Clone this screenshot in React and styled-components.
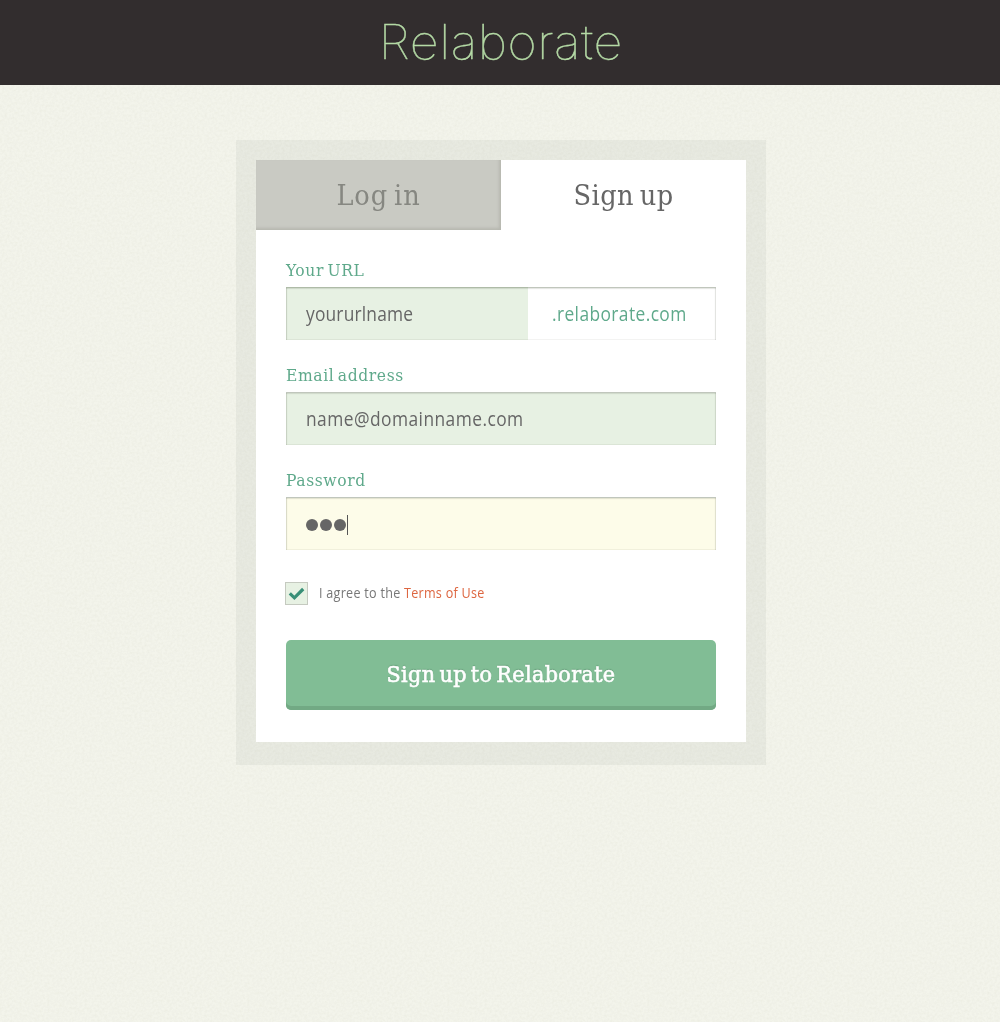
import React from "react";
import styled, { createGlobalStyle } from "styled-components";

const grain = `<svg xmlns="http://www.w3.org/2000/svg" width="200" height="200"><filter id="n" x="0" y="0" width="100%" height="100%"><feTurbulence type="fractalNoise" baseFrequency="0.4" numOctaves="3" stitchTiles="stitch"/><feColorMatrix values="0 0 0 0 0.4  0 0 0 0 0.4  0 0 0 0 0.3  0.16 0 0 0 -0.055"/></filter><rect width="200" height="200" filter="url(#n)"/></svg>`;
const grainUrl = `url("data:image/svg+xml,${encodeURIComponent(grain)}")`;

const serif = `"DejaVu Serif Condensed", "DejaVu Serif", serif`;
const sans = `"Open Sans", "Noto Sans", sans-serif`;

const GlobalStyle = createGlobalStyle`
  * { box-sizing: border-box; }
  body {
    margin: 0;
    min-height: 1022px;
    background: #f3f4eb ${grainUrl};
  }
`;

const Header = styled.header`
  height: 85px;
  background: #322d2e;
  display: flex;
  justify-content: center;
  padding: 12px 0 0 2px;
`;

const Logo = styled.div`
  font: 100 47px/60px Inter, sans-serif;
  letter-spacing: 0.5px;
  color: #b5dba6;
  white-space: nowrap;
  transform: scaleX(1.072);
  -webkit-text-stroke: 0.4px #b5dba6;
`;

const Page = styled.main`
  display: flex;
  justify-content: center;
  padding: 55px 0 0 2px;
`;

const Frame = styled.section`
  width: 530px;
  height: 625px;
  padding: 20px 20px 23px;
  background: rgba(60, 65, 50, 0.055);
`;

const Card = styled.div`
  height: 582px;
  background: #fff;
`;

const Tabs = styled.nav`
  display: grid;
  grid-template-columns: 1fr 1fr;
  height: 70px;
`;

const Tab = styled.a`
  display: flex;
  align-items: center;
  justify-content: center;
  padding-top: 1px;
  font: 28.5px/69px ${serif};
  font-stretch: condensed;
  letter-spacing: ${(p) => p.$spacing};
  word-spacing: -3px;
  color: ${(p) => (p.$active ? "#666" : "#868781")};
  background: ${(p) => (p.$active ? "#fff" : "#c9cac3")};
  box-shadow: ${(p) => (p.$active ? "none" : "inset -2px -2px 3px rgba(90, 90, 75, 0.16)")};
`;

const Form = styled.form`
  padding: 27px 30px 0;
`;

const Field = styled.div`
  height: 105px;
`;

const Label = styled.label`
  display: block;
  height: 30px;
  font: 17.3px/27px ${serif};
  font-stretch: condensed;
  letter-spacing: 0.6px;
  word-spacing: -2px;
  color: #5fa98b;
`;

const Control = styled.div`
  display: flex;
  height: 53px;
  background: ${(p) => p.$fill};
  box-shadow: inset 0 1px 0 #c0c6bc, inset 0 2px 1px rgba(80, 90, 70, 0.16),
    inset 1px 0 1px rgba(80, 90, 70, 0.2), inset -1px 0 1px rgba(80, 90, 70, 0.16),
    inset 0 -1px 0 rgba(80, 90, 70, 0.03);
`;

const Value = styled.div`
  display: flex;
  align-items: center;
  width: ${(p) => p.$width || "100%"};
  padding-left: ${(p) => p.$indent || "20px"};
  background: ${(p) => p.$fill || "transparent"};
  mix-blend-mode: ${(p) => (p.$fill ? "multiply" : "normal")};
  font: 19.6px/53px ${sans};
  color: ${(p) => p.$color || "#666"};
`;

const Narrow = styled.span`
  display: inline-block;
  letter-spacing: ${(p) => p.$spacing};
  white-space: nowrap;
  transform: scaleX(0.887);
  transform-origin: 0 50%;
`;

const Dot = styled.span`
  width: 12px;
  height: 12px;
  margin: 2px 1.9px 0 0;
  border-radius: 50%;
  background: #666;
`;

const Caret = styled.span`
  width: 1px;
  height: 20px;
  margin: 2px 0 0 -0.7px;
  background: #555;
`;

const Agreement = styled.div`
  display: flex;
  align-items: center;
  height: 23px;
  margin: 10px 0 35px -1px;
  font: 14.2px/21px ${sans};
  color: #777;

  ${Narrow} {
    padding-bottom: 2px;
  }
`;

const Checkbox = styled.span`
  display: flex;
  align-items: center;
  justify-content: center;
  width: 23px;
  height: 23px;
  margin-right: 11px;
  border: 1px solid #c5cac0;
  background: #e7f1e3;
`;

const Terms = styled.a`
  color: #dd6640;
`;

const Submit = styled.button`
  display: block;
  width: 430px;
  height: 70px;
  padding: 0 0 2px;
  border: 0;
  border-radius: 5px;
  background: #81bd95;
  box-shadow: inset 0 -4px 0 #72a984;
  font: 400 23px/66px ${serif};
  font-stretch: condensed;
  letter-spacing: 0.4px;
  word-spacing: -3px;
  -webkit-text-stroke: 0.6px #fff;
  color: #fff;
  text-shadow: 0 -1px 1px rgba(50, 100, 70, 0.4);
`;

export default function App() {
  return (
    <>
      <GlobalStyle />
      <Header>
        <Logo>Relaborate</Logo>
      </Header>
      <Page>
        <Frame>
          <Card>
            <Tabs>
              <Tab $spacing="0.9px">Log in</Tab>
              <Tab $active $spacing="0.5px">Sign up</Tab>
            </Tabs>
            <Form>
              <Field>
                <Label>Your URL</Label>
                <Control $fill="#fff">
                  <Value $width="242px" $fill="#e7f1e3">
                    <Narrow $spacing="0.2px">yoururlname</Narrow>
                  </Value>
                  <Value $width="188px" $indent="24px" $color="#5fa98b">
                    <Narrow $spacing="0.45px">.relaborate.com</Narrow>
                  </Value>
                </Control>
              </Field>
              <Field>
                <Label>Email address</Label>
                <Control $fill="#e7f1e3">
                  <Value>
                    <Narrow $spacing="0.5px">name@domainname.com</Narrow>
                  </Value>
                </Control>
              </Field>
              <Field>
                <Label>Password</Label>
                <Control $fill="#fdfce9">
                  <Value>
                    <Dot />
                    <Dot />
                    <Dot />
                    <Caret />
                  </Value>
                </Control>
              </Field>
              <Agreement>
                <Checkbox>
                  <svg width="17" height="15" viewBox="0 0 17 15">
                    <path d="M1.8 7.4L6.4 11.8L15.2 3" fill="none" stroke="#388f77" strokeWidth="3.2" />
                  </svg>
                </Checkbox>
                <Narrow $spacing="0.3px">
                  I agree to the <Terms>Terms of Use</Terms>
                </Narrow>
              </Agreement>
              <Submit type="button">Sign up to Relaborate</Submit>
            </Form>
          </Card>
        </Frame>
      </Page>
    </>
  );
}
